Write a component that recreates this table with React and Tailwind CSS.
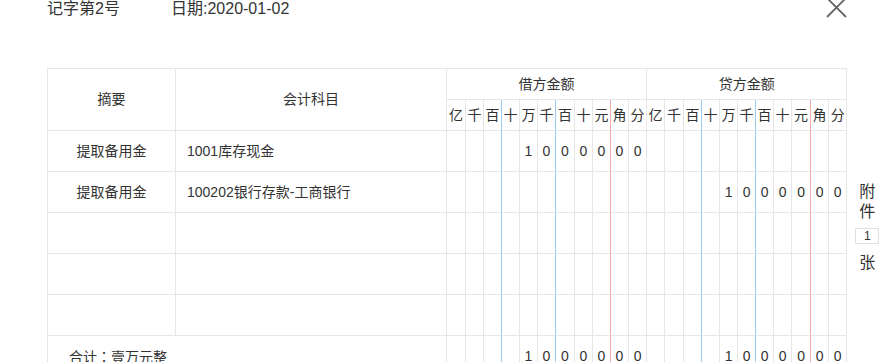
import React from "react";

const UNITS = ["亿", "千", "百", "十", "万", "千", "百", "十", "元", "角", "分"];

// whole-pixel widths for the unit columns so the coloured lines stay crisp
const W18 = "w-[18px]";
const W19 = "w-[19px]";
const DEBIT_COLS = [W19, W18, W18, W18, W18, W18, W19, W18, W18, W18, W18];
const CREDIT_COLS = [W18, W19, W18, W18, W18, W18, W18, W18, W19, W18, W18];

const rows = [
  { summary: "提取备用金", account: "1001库存现金", debit: 10000, credit: 0 },
  { summary: "提取备用金", account: "100202银行存款-工商银行", debit: 0, credit: 10000 },
  { summary: "", account: "", debit: 0, credit: 0 },
  { summary: "", account: "", debit: 0, credit: 0 },
  { summary: "", account: "", debit: 0, credit: 0 },
];

// spread an amount over the 11 unit columns, right aligned on 分
function toDigits(amount) {
  const cells = Array(11).fill("");
  if (!amount) return cells;
  const s = String(Math.round(amount * 100));
  for (let i = 0; i < s.length && i < 11; i++) {
    cells[10 - i] = s[s.length - 1 - i];
  }
  return cells;
}

// cells only draw right + bottom lines; after 百万 and 百 the line is blue, after 元 red
function unitBorder(i) {
  if (i === 2 || i === 5) return "border-b border-r border-b-[#e6e6e6] border-r-[#9ccdf0]";
  if (i === 8) return "border-b border-r border-b-[#e6e6e6] border-r-[#f2a9ab]";
  return "border-b border-r border-[#e6e6e6]";
}

const cell = "border-b border-r border-[#e6e6e6]";

function DigitCells({ amount }) {
  return toDigits(amount).map((d, i) => (
    <td key={i} className={`${unitBorder(i)} p-0 text-center text-[14px]`}>
      {d}
    </td>
  ));
}

export default function App() {
  const debitTotal = rows.reduce((s, r) => s + r.debit, 0);
  const creditTotal = rows.reduce((s, r) => s + r.credit, 0);

  return (
    <div
      className="relative w-[892px] h-[362px] overflow-hidden bg-white pl-[47px] text-[#333]"
      style={{ fontFamily: '"Liberation Sans", "Noto Sans CJK SC", sans-serif' }}
    >
      <div className="flex h-[18px] text-[16px] leading-[18px]">
        <span className="w-[124px]">记字第2号</span>
        <span>日期:2020-01-02</span>
      </div>

      <button className="absolute left-[826px] top-[-3px] w-[21px] h-[21px]">
        <svg width="21" height="21" viewBox="0 0 21 21">
          <path d="M1 1L20 20M20 1L1 20" stroke="#666" strokeWidth="1.8" fill="none" />
        </svg>
      </button>

      <div className="mt-[50px] flex items-start">
        <table className="w-[800px] table-fixed border-separate border-spacing-0 border-l border-t border-[#e6e6e6] text-[14px]">
          <colgroup>
            <col className="w-[128px]" />
            <col className="w-[271px]" />
            {[...DEBIT_COLS, ...CREDIT_COLS].map((w, i) => (
              <col key={i} className={w} />
            ))}
          </colgroup>
          <thead>
            <tr className="h-[31px]">
              <th rowSpan={2} className={`${cell} font-normal`}>摘要</th>
              <th rowSpan={2} className={`${cell} font-normal`}>会计科目</th>
              <th colSpan={11} className={`${cell} font-normal`}>借方金额</th>
              <th colSpan={11} className={`${cell} font-normal`}>贷方金额</th>
            </tr>
            <tr className="h-[31px]">
              {[...UNITS, ...UNITS].map((u, i) => (
                <th key={i} className={`${unitBorder(i % 11)} p-0 font-normal text-[14px]`}>
                  {u}
                </th>
              ))}
            </tr>
          </thead>
          <tbody>
            {rows.map((r, idx) => (
              <tr key={idx} className="h-[41px]">
                <td className={`${cell} text-center`}>{r.summary}</td>
                <td className={`${cell} pl-[11px]`}>{r.account}</td>
                <DigitCells amount={r.debit} />
                <DigitCells amount={r.credit} />
              </tr>
            ))}
            <tr className="h-[42px]">
              <td colSpan={2} className={`${cell} pl-[21px]`}>
                合计
                <span style={{ fontFamily: '"Noto Sans CJK TC", sans-serif' }}>：</span>
                壹万元整
              </td>
              <DigitCells amount={debitTotal} />
              <DigitCells amount={creditTotal} />
            </tr>
          </tbody>
        </table>

        <div className="ml-[8px] w-[24px] pt-[114px] flex flex-col items-center text-[16px] leading-[20px]">
          <span>附</span>
          <span>件</span>
          <div className="mt-[6px] w-[24px] h-[16px] border border-[#e0e0e0] text-[12px] leading-[14px] text-center">
            1
          </div>
          <span className="mt-[9px]">张</span>
        </div>
      </div>
    </div>
  );
}
